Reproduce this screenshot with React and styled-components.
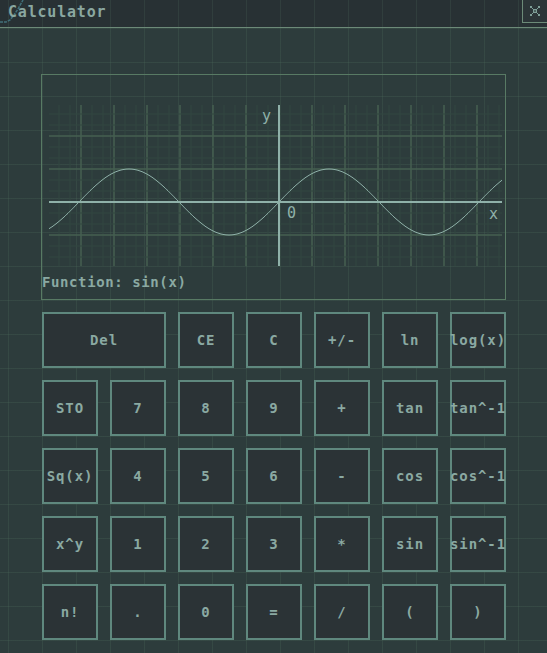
import React from "react";
import styled, { createGlobalStyle } from "styled-components";

const GlobalStyle = createGlobalStyle`
  html, body {
    margin: 0;
    padding: 0;
    background: #2d3c3c;
  }
`;

const KEYS = [
  ["Del", 2], ["CE"], ["C"], ["+/-"], ["ln"], ["log(x)"],
  ["STO"], ["7"], ["8"], ["9"], ["+"], ["tan"], ["tan^-1"],
  ["Sq(x)"], ["4"], ["5"], ["6"], ["-"], ["cos"], ["cos^-1"],
  ["x^y"], ["1"], ["2"], ["3"], ["*"], ["sin"], ["sin^-1"],
  ["n!"], ["."], ["0"], ["="], ["/"], ["("], [")"],
];

const PLOT_W = 453;
const PLOT_H = 161;
const ORIGIN_X = 230;
const ORIGIN_Y = 97;

const sinePoints = () => {
  const pts = [];
  for (let x = 0; x <= PLOT_W; x += 1) {
    const y = ORIGIN_Y - 33 * Math.sin(((x - ORIGIN_X) * Math.PI) / 100);
    pts.push(`${x},${y.toFixed(1)}`);
  }
  return pts.join(" ");
};

// faint minor lines every 11px, stronger ones every 33px
const gridLines = () => {
  const lines = [];
  for (let x = ORIGIN_X % 11; x <= PLOT_W; x += 11) {
    const major = Math.round(x - ORIGIN_X) % 33 === 0;
    lines.push(
      <line key={"v" + x} x1={x} y1={0} x2={x} y2={PLOT_H}
        stroke={major ? "#465f50" : "#334740"} strokeWidth={major ? 1.5 : 1} />
    );
  }
  for (let y = ORIGIN_Y % 11; y <= PLOT_H; y += 11) {
    const major = Math.round(y - ORIGIN_Y) % 33 === 0;
    lines.push(
      <line key={"h" + y} x1={0} y1={y} x2={PLOT_W} y2={y}
        stroke={major ? "#465f50" : "#334740"} strokeWidth={major ? 1.5 : 1} />
    );
  }
  return lines;
};

const App = () => {
  return (
    <Window>
      <GlobalStyle />
      <TitleBar>
        <Corner width="26" height="24" viewBox="0 0 26 24">
          <polyline points="0,22 6,22 10,20 14,15 18,9 23,0"
            fill="none" stroke="#41707a" strokeWidth="1.5" strokeDasharray="3 1" />
        </Corner>
        <Title>Calculator</Title>
        <CloseButton>
          <svg width="10" height="10" viewBox="0 0 10 10">
            <path d="M0 0h2v2H0zM8 0h2v2H8zM0 8h2v2H0zM8 8h2v2H8zM2 2h1v1H2zM7 2h1v1H7zM2 7h1v1H2zM7 7h1v1H7zM3 3h4v4H3z"
              fill="#7f9e98" />
            <path d="M4 4h2v2H4z" fill="#4d6260" />
          </svg>
        </CloseButton>
      </TitleBar>

      <Body>
        <GraphPanel>
          <Plot width={PLOT_W} height={PLOT_H} viewBox={`0 0 ${PLOT_W} ${PLOT_H}`}>
            {gridLines()}
            <line x1={0} y1={ORIGIN_Y} x2={PLOT_W} y2={ORIGIN_Y} stroke="#8fb1a9" strokeWidth="2" />
            <line x1={ORIGIN_X} y1={0} x2={ORIGIN_X} y2={PLOT_H} stroke="#8fb1a9" strokeWidth="2" />
            <polyline points={sinePoints()} fill="none" stroke="#8fb1a9" strokeWidth="1" />
            <AxisText x={213} y={16}>y</AxisText>
            <AxisText x={238} y={113}>0</AxisText>
            <AxisText x={440} y={114}>x</AxisText>
          </Plot>
          <FunctionLabel>Function: sin(x)</FunctionLabel>
        </GraphPanel>

        <Keypad>
          {KEYS.map(([label, span]) => (
            <Key key={label} $span={span || 1}>{label}</Key>
          ))}
        </Keypad>
      </Body>
    </Window>
  );
};

export default App;

const Window = styled.div`
  width: 547px;
  height: 653px;
  overflow: hidden;
  background-color: #2d3c3c;
  background-image:
    linear-gradient(to right, rgba(84, 116, 96, 0.22) 1px, transparent 1px),
    linear-gradient(to bottom, rgba(84, 116, 96, 0.22) 1px, transparent 1px);
  background-size: 34px 34px;
  background-position: 8px 28px;
  font-family: "DejaVu Sans Mono", "Liberation Mono", monospace;
  color: #8aa9a2;
`;

const TitleBar = styled.div`
  position: relative;
  height: 27px;
  display: flex;
  align-items: center;
  justify-content: space-between;
  background-color: #283134;
  background-image: linear-gradient(to right, rgba(84, 116, 96, 0.2) 1px, transparent 1px);
  background-size: 34px 34px;
  background-position: 8px 0;
  border-bottom: 1px solid #6c8a78;
`;

const Corner = styled.svg`
  position: absolute;
  left: 0;
  top: 0;
`;

const Title = styled.span`
  position: relative;
  margin: 0 0 4px 8px;
  font-size: 15px;
  font-weight: bold;
  letter-spacing: 0.8px;
  color: #8aa7a0;
`;

const CloseButton = styled.div`
  align-self: flex-start;
  width: 24px;
  height: 22px;
  display: flex;
  align-items: center;
  justify-content: center;
  border-left: 1px solid #6c8a78;
  border-bottom: 1px solid #6c8a78;
  background: #2c3538;
`;

const Body = styled.div`
  padding: 46px 0 0 41px;
`;

const GraphPanel = styled.div`
  box-sizing: border-box;
  width: 465px;
  height: 226px;
  border: 1px solid #587a64;
  padding-top: 30px;
  display: flex;
  flex-direction: column;
`;

const Plot = styled.svg`
  display: block;
  margin-left: 7px;
`;

const AxisText = styled.text`
  font-family: "DejaVu Sans Mono", monospace;
  font-size: 15px;
  fill: #8fb1a9;
`;

const FunctionLabel = styled.div`
  margin-top: 8px;
  font-size: 14px;
  font-weight: bold;
  letter-spacing: 0.6px;
  line-height: 17px;
`;

const Keypad = styled.div`
  margin: 12px 0 0 1px;
  display: grid;
  grid-template-columns: repeat(7, 56px);
  grid-auto-rows: 56px;
  gap: 12px;
`;

const Key = styled.div`
  grid-column: span ${(p) => p.$span};
  box-sizing: border-box;
  display: flex;
  align-items: center;
  justify-content: center;
  white-space: nowrap;
  overflow: visible;
  background: #2b3336;
  border: 2px solid #5f887e;
  font-size: 14px;
  font-weight: bold;
  letter-spacing: 0.9px;
  color: #8aa9a2;
`;
